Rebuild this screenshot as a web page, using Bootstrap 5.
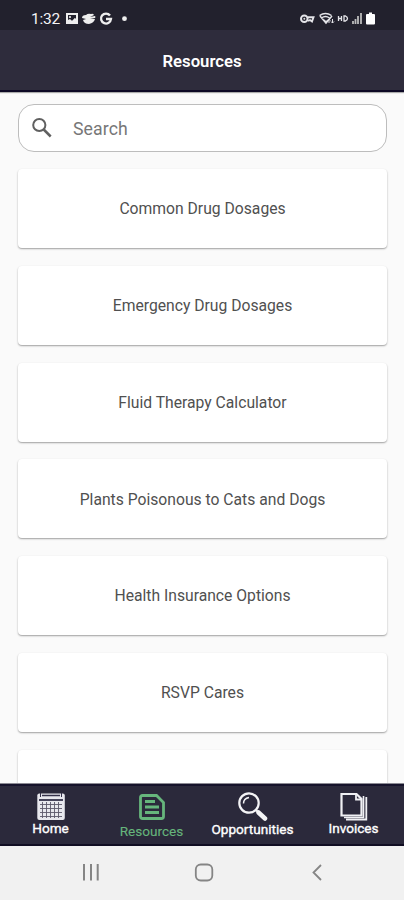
<!DOCTYPE html>
<html lang="en">
<head>
<meta charset="utf-8">
<meta name="viewport" content="width=device-width, initial-scale=1">
<title>Resources</title>
<link href="https://cdn.jsdelivr.net/npm/bootstrap@5.3.0/dist/css/bootstrap.min.css" rel="stylesheet">
<style>
body{font-family:Roboto,"Liberation Sans",sans-serif;background:#fafafa;color:#333;height:900px}
svg{display:block;flex:none}
.status-strip{height:30px;background:#22212d;color:#f4f4f6;padding:8px 28px 0 31px}
.clock{font-size:15.5px;line-height:22px;width:34px;letter-spacing:-.2px}
.app-title{height:62px;background:#2e2c3c;border-bottom:2px solid #0d0925;box-shadow:0 1px 1px #aaa;color:#fff;font-size:16.7px;font-weight:600;padding-top:3px;position:relative}
.page-body{padding:12px 17px 0 18px}
.search-box{height:48px;border:1px solid #bdbdbd;border-radius:16px;background:#fff;padding-left:12px;margin-bottom:17px}
.search-box input{font-size:17.7px;color:#777;letter-spacing:.1px;margin-left:19px;margin-top:2px}
.search-box input::placeholder{color:#777;opacity:1}
.res-list{gap:17.8px}
.res-card{height:79px;border-radius:4px;background:#fff;font-size:15.7px;padding-top:1px;color:#505050;box-shadow:0 1px 1.5px rgba(0,0,0,.3),0 1px 3px rgba(0,0,0,.08);flex:none}
.tab-strip{height:62px;background:#2b293b;border-top:2px solid #16132b;border-bottom:2px solid #100d22;box-shadow:0 -1px 0 #8b8a93;position:relative}
.tab-item{color:#fff;font-size:13.6px;font-weight:400;-webkit-text-stroke:.35px currentColor;line-height:15px;width:101px;flex:none;text-decoration:none;padding-top:6px}
.tab-item.active{color:#66b57c;-webkit-text-stroke-width:.1px}
.tab-item.active span{margin-top:2px}
.sys-nav{height:54px;background:#f1f1f1;color:#858585}
</style>
<script src="https://cdn.jsdelivr.net/npm/bootstrap@5.3.0/dist/js/bootstrap.bundle.min.js"></script>
</head>
<body class="d-flex flex-column overflow-hidden">
<div class="status-strip d-flex align-items-start justify-content-between flex-shrink-0">
  <div class="d-flex align-items-center">
    <span class="clock">1:32</span>
    <svg width="62" height="14" viewBox="0 0 62 14" fill="#eee">
      <path fill-rule="evenodd" d="M1 1h12v11H1zM3 3v5l2-1 2 2 3-3 1 1V3z"/><path d="M4 4h2v2H4zM3 10l2-2 2 1 3-3 1 4z" opacity=".8"/>
      <path d="M17 6Q17 3 21 3q2-2 5-1 2-1 3 1l-4 2 5-1q1 1 0 2l-5 1h5q-1 4-6 5-5 0-6-4l3-1z"/>
      <path d="M45 3.500A5 5 0 1 0 46 7h-5" fill="none" stroke="#eee" stroke-width="2.300"/>
      <circle cx="59.500" cy="6.700" r="2.400"/>
    </svg>
  </div>
  <svg class="mt-1" width="77" height="15" viewBox="299 12 77 15" fill="none" stroke="#e4e4e8">
    <circle cx="304.300" cy="18.700" r="3.300" stroke-width="2"/><circle cx="304.300" cy="18.700" r="1" fill="#ddd" stroke="none"/>
    <path d="M307.500 17.300h6l-1.500 4.200-2-1.500-2 1" stroke-width="1.900"/>
    <path d="M319.500 15.500q6-4 12 0M321.500 18q4-3 8 0M320 16l6 7 6-7M324 20l2 2 2-2" stroke-width="1.500"/><path d="M329 23v-4m-1.500 1.500L329 19l1.500 1.500M332.500 19v4m-1.500-1.500l1.500 1.500 1.500-1.500"/>
    <path d="M338.500 16v5m3-5v5m-3-2.500h3M344 16v5h1.500q2-1 2-2.500t-2-2.500z" stroke-width="1.300"/>
    <path d="M353 24v-3m2.500 3v-5m2.500 5v-8m3 8V13" stroke-width="1.800" stroke="#bbb"/>
    <path d="M367 14h2v-1.500h3V14h2q1 0 1 1v8.500q0 1-1 1h-7q-1 0-1-1V15q0-1 1-1z" fill="#fff" stroke="none"/>
  </svg>
</div>
<header class="app-title d-flex align-items-center justify-content-center flex-shrink-0">Resources</header>
<main class="page-body flex-grow-1 overflow-hidden">
  <div class="search-box d-flex align-items-center">
    <svg width="23" height="23" viewBox="0 0 23 23" fill="none" stroke="#606060"><circle cx="8.300" cy="8" r="6.100" stroke-width="2"/><path d="M12.700 12.500l7 7" stroke-width="2.500"/></svg>
    <input type="text" class="form-control border-0 bg-transparent p-0 shadow-none" placeholder="Search" aria-label="Search">
  </div>
  <div class="res-list d-flex flex-column">
    <div class="res-card d-flex align-items-center justify-content-center">Common Drug Dosages</div>
    <div class="res-card d-flex align-items-center justify-content-center">Emergency Drug Dosages</div>
    <div class="res-card d-flex align-items-center justify-content-center">Fluid Therapy Calculator</div>
    <div class="res-card d-flex align-items-center justify-content-center">Plants Poisonous to Cats and Dogs</div>
    <div class="res-card d-flex align-items-center justify-content-center">Health Insurance Options</div>
    <div class="res-card d-flex align-items-center justify-content-center">RSVP Cares</div>
    <div class="res-card"></div>
  </div>
</main>
<nav class="tab-strip d-flex flex-shrink-0">
  <a href="#" class="tab-item d-flex flex-column align-items-center">
    <svg width="30" height="29" viewBox="0 0 30 29"><rect x="1.300" y="1.500" width="27.500" height="26.500" rx="2" fill="#e8e8ee"/><path d="M6 3.500h18" stroke="#34314a" stroke-width="1.500"/><path d="M4.500 1v4M25.500 1v4" stroke="#34314a"/><path d="M3 8h24" stroke="#34314a" stroke-width="1.800"/><path d="M4 12.500h22M4 16.500h22M4 20.500h22M4 24.500h22M6.500 10v16M10.500 10v16M14.500 10v16M18.500 10v16M22.500 10v16" stroke="#5c596b" stroke-width=".9"/></svg>
    <span>Home</span>
  </a>
  <a href="#" class="tab-item active d-flex flex-column align-items-center">
    <svg width="28" height="30" viewBox="0 0 28 30" fill="none" stroke="#66b57c" stroke-width="2.800"><path d="M4.500 3.500h14l7 7v14q0 2-2 2h-19q-2 0-2-2v-19q0-2 2-2z"/><path d="M7 9.500h10M7 15h14M7 20.500h14"/></svg>
    <span>Resources</span>
  </a>
  <a href="#" class="tab-item d-flex flex-column align-items-center">
    <svg width="30" height="30" viewBox="0 0 30 30" fill="none" stroke="#f4f4f6"><circle cx="11" cy="11" r="9.700" stroke-width="2.200"/><path d="M5.500 11.500q0-5 5.500-6" stroke-width="1.500"/><path d="M18 18l3 3" stroke-width="2"/><path d="M20.500 20.500l6.500 6" stroke-width="4.500" stroke-linecap="round"/></svg>
    <span>Opportunities</span>
  </a>
  <a href="#" class="tab-item d-flex flex-column align-items-center">
    <svg width="30" height="29" viewBox="0 0 30 29" fill="none" stroke="#f0f0f4"><path d="M2.500 2h15l5 5v16.500h-20z" stroke-width="2.200"/><path d="M17 2v5.500h5" stroke-width="1.800"/><path d="M24.500 4v21.500H5" stroke-width="1.600"/><path d="M27.300 5v22.500H7" stroke-width="1.800"/></svg>
    <span>Invoices</span>
  </a>
</nav>
<div class="sys-nav flex-shrink-0 d-flex justify-content-center">
  <svg width="404" height="54" viewBox="0 846 404 54" fill="none" stroke="#858585"><path d="M84 864v16.500M91 864v16.500M97.700 864v16.500" stroke-width="2"/><rect x="195.800" y="864.500" width="16.500" height="16" rx="5" stroke-width="1.800"/><path d="M321 865l-7.500 7.500 7.500 7.500" stroke-width="1.800"/></svg>
</div>
</body>
</html>
